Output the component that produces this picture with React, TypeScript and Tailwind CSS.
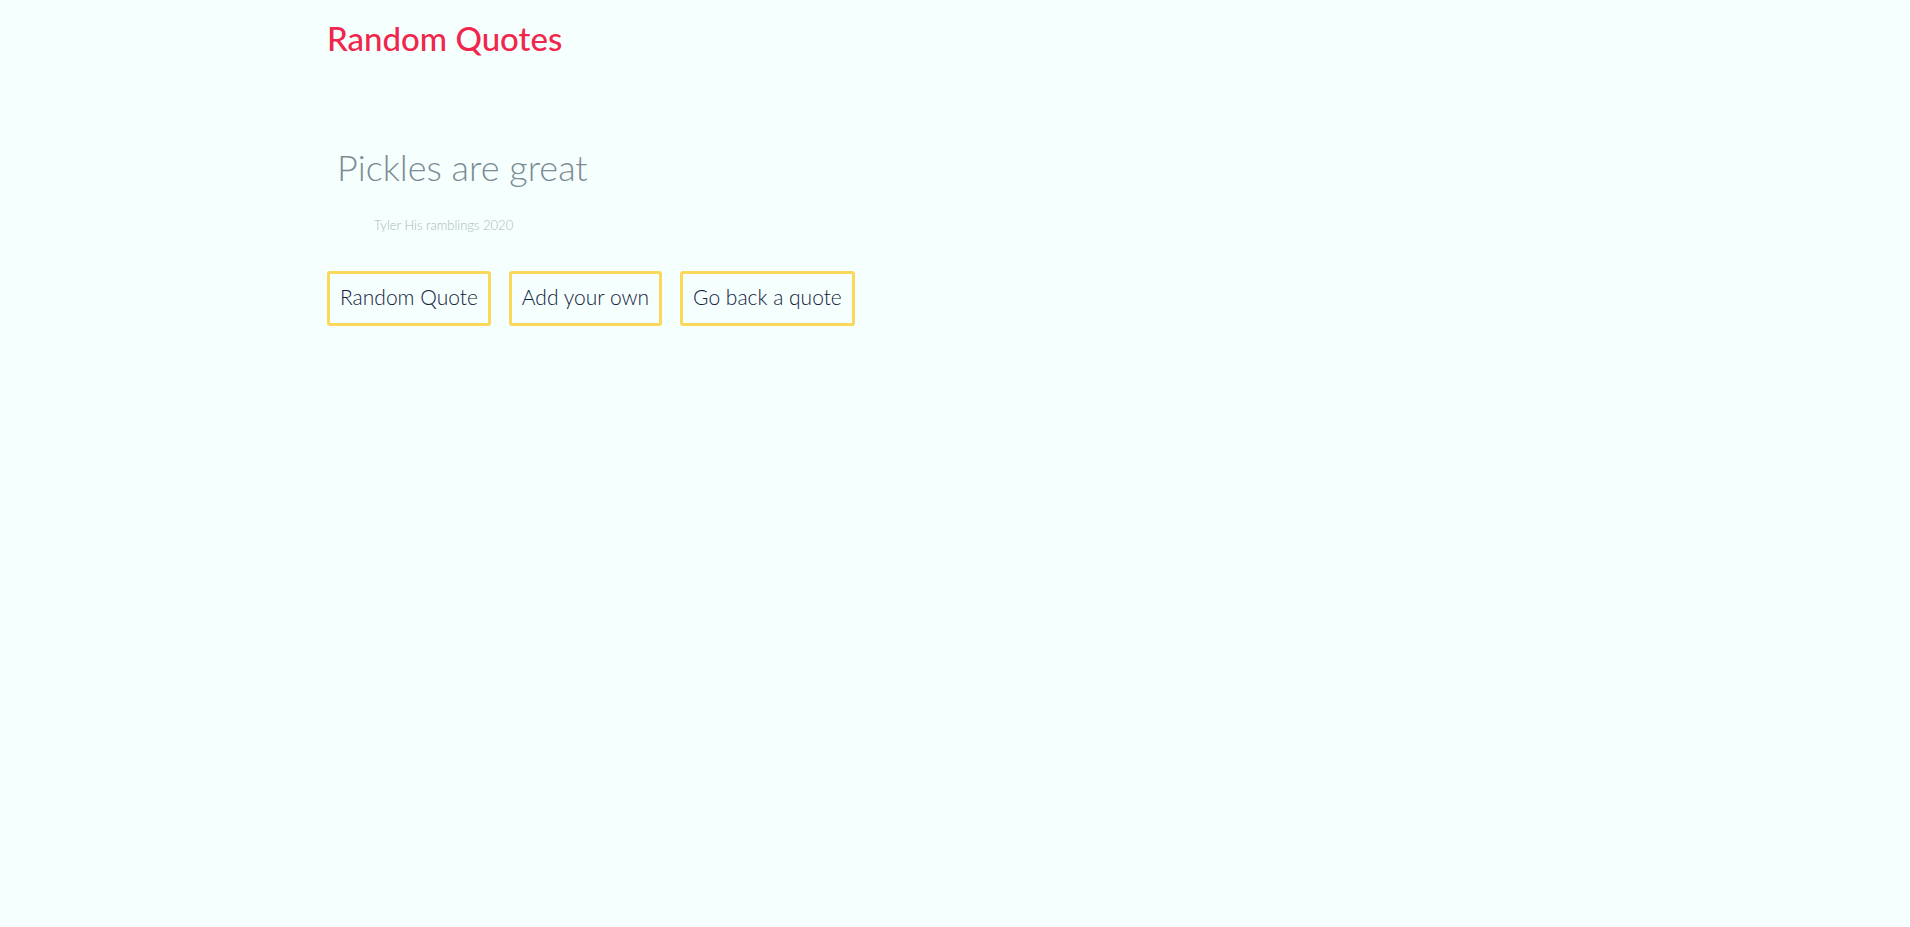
const actions = ['Random Quote', 'Add your own', 'Go back a quote'];

export default function App() {
  return (
    <div className="min-h-screen bg-[#f5fffe] font-['Lato','Open_Sans',sans-serif]">
      <main className="mx-auto max-w-[1256px]">
        <h1 className="pt-4 text-[33px] leading-[44px] font-medium text-[#f0264c]">Random Quotes</h1>
        <section className="mt-20 px-[10px]">
          <p className="text-[36px] leading-[54px] font-light text-[#7c8b94]">Pickles are great</p>
          <p className="mt-5 pl-[37px] text-[13px] leading-[22px] font-light text-[#a9babb]">Tyler His ramblings 2020</p>
        </section>
        <div className="mt-[35px] flex flex-wrap gap-[18px]">
          {actions.map((label) => (
            <button key={label} type="button" className="rounded-[3px] border-3 border-[#fbd85b] px-[10px] pt-[10px] pb-[14px] text-[21px] leading-[25px] font-light text-[#14203c]">{label}</button>
          ))}
        </div>
      </main>
    </div>
  );
}
